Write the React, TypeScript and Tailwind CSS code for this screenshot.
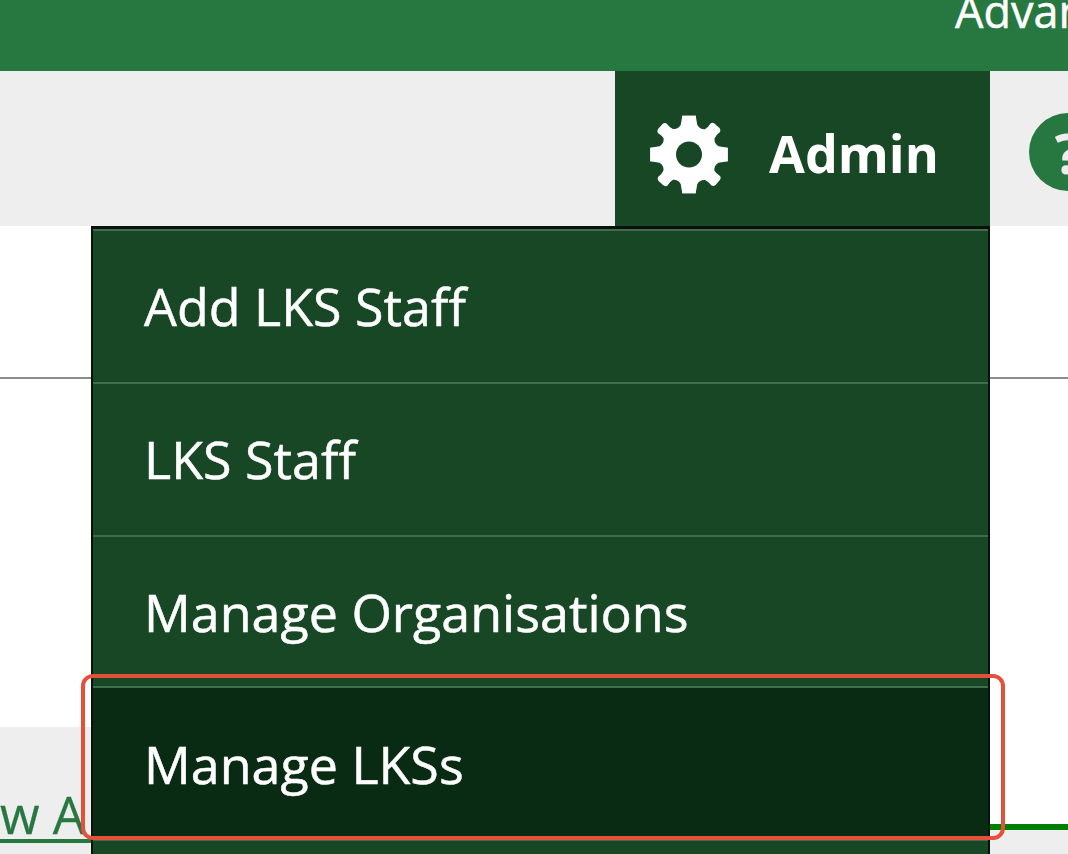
import React from "react";

interface MenuItem {
  label: string;
  active?: boolean;
  rowClass: string;
}

const MENU_ITEMS: MenuItem[] = [
  { label: "Add LKS Staff", rowClass: "h-[153px] pb-0.5" },
  { label: "LKS Staff", rowClass: "h-[153px] pb-0.5" },
  { label: "Manage Organisations", rowClass: "h-[151px]" },
  { label: "Manage LKSs", active: true, rowClass: "h-[153px]" },
  { label: "", rowClass: "h-[153px]" },
];

// One quadrant of the cog, repeated four times around the centre
const COG_QUADRANT =
  "M-6.7 -38.7H6.7L8.3 -29.5Q11 -25 16 -25.3Q19 -27 21.5 -31Q23.5 -32.5 26 -30.5L30.5 -26.5Q32 -24.5 31 -22.5Q27 -19.5 25.5 -16Q25 -11 29.5 -8.3L38.7 -6.7V6.7H0L-6.7 0Z";

function CogIcon() {
  return (
    <svg viewBox="-40 -40.5 80 80" className="h-20 w-20 shrink-0">
      {[0, 90, 180, 270].map((angle) => (
        <path key={angle} d={COG_QUADRANT} fill="#fff" transform={`rotate(${angle})`} />
      ))}
      <circle r="13" fill="#174724" />
    </svg>
  );
}

function AdminMenu() {
  return (
    <ul className="absolute top-[226px] left-[91px] w-[899px] border-2 border-t-[3px] border-[#09110b] bg-[#174724]">
      {MENU_ITEMS.map((item, index) => (
        <li
          key={index}
          className={`flex items-center border-t-2 border-[#456b4f] pl-[51px] text-[52px] leading-none text-white [-webkit-text-stroke:0.5px] ${item.rowClass} ${
            item.active ? "bg-[#092a13]" : ""
          }`}
        >
          <a href="#" className="whitespace-nowrap">{item.label}</a>
        </li>
      ))}
    </ul>
  );
}

export default function App() {
  return (
    <div className="relative flex h-screen w-full flex-col overflow-hidden bg-white font-['Open_Sans',sans-serif]">
      <header className="flex h-[71px] shrink-0 justify-end overflow-hidden bg-[#267740]">
        <a href="#" className="-mt-[11px] w-[113px] text-[45px] leading-[44px] whitespace-nowrap text-white [-webkit-text-stroke:0.5px]">
          Advanced
        </a>
      </header>

      <nav className="flex h-[155px] shrink-0 justify-end bg-[#eee]">
        <button className="flex w-[375px] items-center bg-[#174724] pt-3 pb-[1px] pl-[34px] text-white">
          <CogIcon />
          <span className="-mt-[3px] ml-[40px] text-[52px] leading-none font-bold">Admin</span>
        </button>
        <div className="flex w-[78px] items-center overflow-hidden pt-1.5 pl-[39px]">
          <span className="flex h-[78px] w-[78px] shrink-0 items-center justify-center rounded-full bg-[#267740] text-[56px] leading-none font-bold text-[#eee]">
            ?
          </span>
        </div>
      </nav>

      <main className="flex grow flex-col">
        <div className="h-[153px] shrink-0 border-b-2 border-[#8c8c8c]" />
        <div className="flex grow justify-between">
          <section className="flex w-[91px] flex-col">
            <div className="h-[348px] shrink-0" />
            <div className="grow overflow-hidden bg-[#eee] pt-[60px]">
              <a href="#" className="block h-[56px] border-b-4 border-[#267740] text-[51px] leading-[54px] whitespace-nowrap text-[#267740] [-webkit-text-stroke:0.3px]">
                w A
              </a>
            </div>
          </section>
          <section className="flex w-[78px] flex-col">
            <div className="h-[445px] shrink-0" />
            <div className="grow border-t-[6px] border-[#008000] bg-[#eee]" />
          </section>
        </div>
      </main>

      <AdminMenu />

      {/* Highlight around the active entry */}
      <div className="absolute top-[674px] left-[81px] h-[166px] w-[924px] rounded-xl border-4 border-[#e5503b]" />
    </div>
  );
}
